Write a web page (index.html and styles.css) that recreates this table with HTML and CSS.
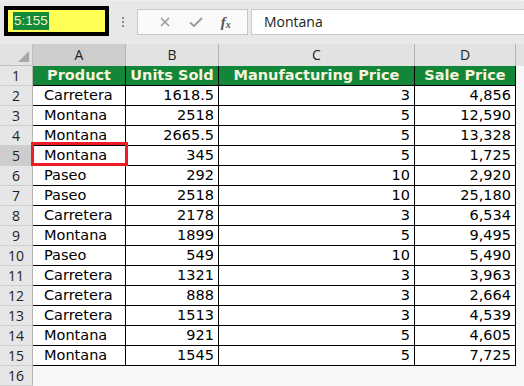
FILE: index.html
```html
<!DOCTYPE html>
<html lang="en">
<head>
  <meta charset="UTF-8">
  <title>Sales sheet</title>
  <link rel="stylesheet" href="styles.css">
</head>
<body>
  <div class="toolbar">
    <div class="namebox"><span class="sel">5:155</span></div>
    <div class="grip"><span></span><span></span><span></span></div>
    <div class="fbtns">
      <svg class="ico" width="14" height="14" viewBox="0 0 14 14"><path d="M3 3 L11 11 M11 3 L3 11" stroke="#9a9a9a" stroke-width="1.6" fill="none"/></svg>
      <svg class="ico" width="16" height="14" viewBox="0 0 16 14"><path d="M2 7.5 L6 11 L14 3" stroke="#9a9a9a" stroke-width="1.8" fill="none"/></svg>
      <span class="fx">f<sub>x</sub></span>
    </div>
    <div class="finput">Montana</div>
  </div>

  <div class="sheet">
    <div class="corner"><span class="tri"></span></div>
    <div class="colhead active">A</div>
    <div class="colhead">B</div>
    <div class="colhead">C</div>
    <div class="colhead">D</div>
    <div class="colhead blank"></div>

    <div class="rowhead">1</div>
    <div class="cell head">Product</div>
    <div class="cell head">Units Sold</div>
    <div class="cell head">Manufacturing Price</div>
    <div class="cell head">Sale Price</div>
    <div class="spare"></div>

    <div class="rowhead">2</div>
    <div class="cell">Carretera</div><div class="cell num">1618.5</div><div class="cell num">3</div><div class="cell num">4,856</div><div class="spare"></div>
    <div class="rowhead">3</div>
    <div class="cell">Montana</div><div class="cell num">2518</div><div class="cell num">5</div><div class="cell num">12,590</div><div class="spare"></div>
    <div class="rowhead">4</div>
    <div class="cell">Montana</div><div class="cell num">2665.5</div><div class="cell num">5</div><div class="cell num">13,328</div><div class="spare"></div>
    <div class="rowhead active">5</div>
    <div class="cell picked">Montana</div><div class="cell num">345</div><div class="cell num">5</div><div class="cell num">1,725</div><div class="spare"></div>
    <div class="rowhead">6</div>
    <div class="cell">Paseo</div><div class="cell num">292</div><div class="cell num">10</div><div class="cell num">2,920</div><div class="spare"></div>
    <div class="rowhead">7</div>
    <div class="cell">Paseo</div><div class="cell num">2518</div><div class="cell num">10</div><div class="cell num">25,180</div><div class="spare"></div>
    <div class="rowhead">8</div>
    <div class="cell">Carretera</div><div class="cell num">2178</div><div class="cell num">3</div><div class="cell num">6,534</div><div class="spare"></div>
    <div class="rowhead">9</div>
    <div class="cell">Montana</div><div class="cell num">1899</div><div class="cell num">5</div><div class="cell num">9,495</div><div class="spare"></div>
    <div class="rowhead">10</div>
    <div class="cell">Paseo</div><div class="cell num">549</div><div class="cell num">10</div><div class="cell num">5,490</div><div class="spare"></div>
    <div class="rowhead">11</div>
    <div class="cell">Carretera</div><div class="cell num">1321</div><div class="cell num">3</div><div class="cell num">3,963</div><div class="spare"></div>
    <div class="rowhead">12</div>
    <div class="cell">Carretera</div><div class="cell num">888</div><div class="cell num">3</div><div class="cell num">2,664</div><div class="spare"></div>
    <div class="rowhead">13</div>
    <div class="cell">Carretera</div><div class="cell num">1513</div><div class="cell num">3</div><div class="cell num">4,539</div><div class="spare"></div>
    <div class="rowhead">14</div>
    <div class="cell">Montana</div><div class="cell num">921</div><div class="cell num">5</div><div class="cell num">4,605</div><div class="spare"></div>
    <div class="rowhead">15</div>
    <div class="cell">Montana</div><div class="cell num">1545</div><div class="cell num">5</div><div class="cell num">7,725</div><div class="spare"></div>
    <div class="rowhead">16</div>
    <div class="empty"></div>
  </div>
</body>
</html>
```

FILE: styles.css
```css
body {
  margin: 0;
  background: #f7f7f7;
  font-family: 'DejaVu Sans', Verdana, sans-serif;
  width: 524px;
  height: 386px;
  overflow: hidden;
}

.toolbar {
  height: 44px;
  background: #e8e8e8;
  border-top: 1px dotted #f4f4f4;
  box-sizing: border-box;
  display: flex;
  align-items: flex-start;
}

.namebox {
  margin: 5px 0 0 4px;
  width: 105px;
  height: 30px;
  box-sizing: border-box;
  border: 4px solid #000;
  background: #ffff55;
  display: flex;
  align-items: center;
  padding-left: 5px;
}

.namebox .sel {
  background: #128a3a;
  color: #f4f0c8;
  font-family: 'Liberation Sans', Arial, sans-serif;
  font-size: 13.5px;
  line-height: 18px;
  padding: 0 1px;
}

.grip {
  width: 28px;
  margin-top: 16px;
  display: flex;
  flex-direction: column;
  align-items: center;
  gap: 2px;
}

.grip span {
  width: 2px;
  height: 2px;
  background: #8c8c8c;
}

.fbtns {
  margin-top: 8px;
  width: 111px;
  height: 26px;
  box-sizing: border-box;
  border: 1px solid #c8c8c8;
  background: #fafafa;
  display: flex;
  align-items: center;
  justify-content: space-around;
  padding: 0 8px 0 12px;
}

.fx {
  font-family: 'Liberation Serif', serif;
  font-style: italic;
  font-weight: bold;
  font-size: 15px;
  color: #555;
}

.fx sub {
  font-size: 10px;
  vertical-align: -1px;
}

.finput {
  margin: 8px 0 0 3px;
  flex: 1;
  height: 26px;
  box-sizing: border-box;
  border: 1px solid #c8c8c8;
  border-right: none;
  background: #fff;
  font-family: 'Open Sans', sans-serif;
  font-size: 14px;
  line-height: 24px;
  padding-left: 12px;
  color: #222;
}

.sheet {
  display: grid;
  grid-template-columns: 33px 93px 93px 196px 101px 1fr;
  grid-template-rows: 22px repeat(16, 20px);
}

.corner {
  background: #e2e2e2;
  border-right: 1px solid #c0c0c0;
  border-bottom: 1px solid #c0c0c0;
  position: relative;
}

.corner .tri {
  position: absolute;
  right: 3px;
  bottom: 3px;
  width: 0;
  height: 0;
  border-left: 11px solid transparent;
  border-bottom: 11px solid #a8a8a8;
}

.colhead {
  background: #e2e2e2;
  border-right: 1px solid #b4b4b4;
  font-family: 'Open Sans', sans-serif;
  font-size: 14px;
  color: #222;
  text-align: center;
  line-height: 22px;
}

.colhead.active {
  background: #cdcdcd;
}

.colhead.blank {
  border-right: none;
}

.rowhead {
  background: #e6e6e6;
  border-right: 1px solid #b4b4b4;
  border-bottom: 1px solid #cfcfcf;
  font-family: 'Open Sans', sans-serif;
  font-size: 14px;
  color: #222;
  text-align: center;
  line-height: 19px;
}

.rowhead.active {
  background: #cdcdcd;
}

.cell {
  background: #fff;
  border-right: 1px solid #000;
  border-bottom: 1px solid #000;
  font-size: 14.5px;
  line-height: 19px;
  color: #000;
  padding: 0 4px 0 11px;
  white-space: nowrap;
  overflow: visible;
}

.cell.num {
  text-align: right;
}

.cell.head {
  background: #12873a;
  color: #f6f3dc;
  font-weight: bold;
  font-size: 14.5px;
  text-align: center;
  padding: 0;
}

.cell.picked {
  position: relative;
}

.cell.picked::after {
  content: '';
  position: absolute;
  top: -4px;
  left: -2px;
  right: -3px;
  bottom: -1px;
  border: 3px solid #ee1c25;
}

.spare {
  background: #f7f7f7;
}

.empty {
  grid-column: 2 / 7;
  background: #f7f7f7;
}
```
